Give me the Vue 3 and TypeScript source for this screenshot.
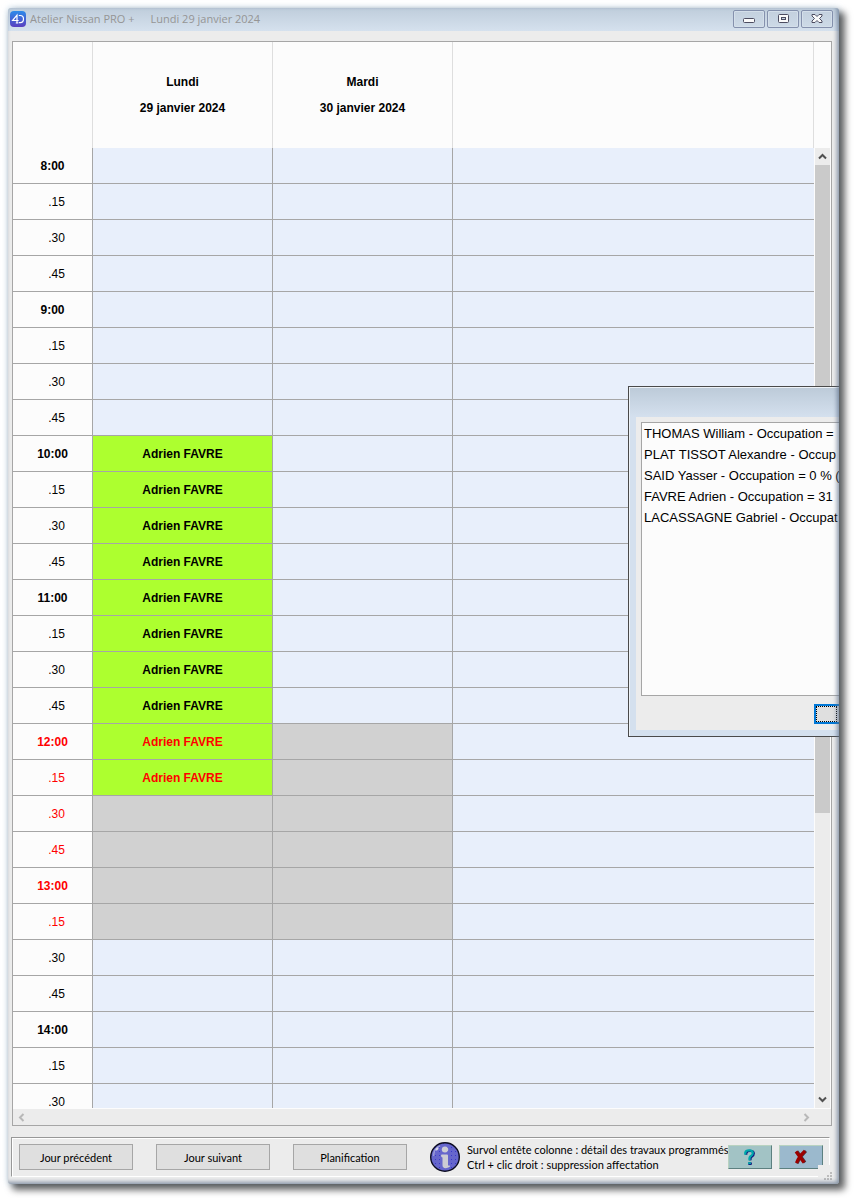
<script setup lang="ts">
interface Slot {
  label: string
  hour: boolean
  pause: boolean
  booked: string
  off: boolean[]
}

const quarters = ['', '.15', '.30', '.45']
const slots: Slot[] = Array.from({ length: 27 }, (_, i) => {
  const hour = i % 4 === 0
  const booked = i >= 8 && i <= 17
  const pause = i >= 16 && i <= 21
  return {
    label: hour ? `${8 + i / 4}:00` : quarters[i % 4],
    hour,
    pause,
    booked: booked ? 'Adrien FAVRE' : '',
    off: [pause && !booked, pause],
  }
})

const days = [
  { name: 'Lundi', date: '29 janvier 2024' },
  { name: 'Mardi', date: '30 janvier 2024' },
]

const occupation: string[] = [
  'THOMAS William - Occupation =',
  'PLAT TISSOT Alexandre - Occup',
  'SAID Yasser - Occupation = 0 % (',
  'FAVRE Adrien - Occupation = 31',
  'LACASSAGNE Gabriel - Occupat',
]

const actions = ['Jour précédent', 'Jour suivant', 'Planification']
</script>

<template>
  <div class="desktop">
    <main class="window">
      <header class="titlebar">
        <svg class="logo" viewBox="0 0 16 16" aria-hidden="true">
          <defs>
            <linearGradient id="logoFill" x1="0" y1="0" x2="0" y2="1">
              <stop offset="0" stop-color="#2d8bea" />
              <stop offset="1" stop-color="#5a3fc0" />
            </linearGradient>
          </defs>
          <rect width="16" height="16" rx="4" fill="url(#logoFill)" />
          <path d="M8.6 9.5H2.6L7 4.2V12M5.8 12h2.4M8.8 4.5h1.4c4.4 0 4.4 7.2 0 7.2H8.8" fill="none" stroke="#fff" stroke-width="1.2" />
        </svg>
        <h1 class="title"><span>Atelier Nissan PRO +</span><span>Lundi 29 janvier 2024</span></h1>
        <div class="controls">
          <button type="button" class="control" aria-label="Réduire">
            <svg viewBox="0 0 12 10"><rect x=".5" y="4.500" width="11" height="4" rx="1" fill="#fafafa" stroke="#4c4c60" /></svg>
          </button>
          <button type="button" class="control" aria-label="Agrandir">
            <svg viewBox="0 0 12 10"><rect x="1.500" y=".5" width="10" height="8" rx="1" fill="#fafafa" stroke="#4c4c60" /><rect x="4.500" y="3.500" width="4" height="2" fill="#c5d2e0" stroke="#4c4c60" /></svg>
          </button>
          <button type="button" class="control" aria-label="Fermer">
            <svg viewBox="0 0 12 10"><path d="M1 .5h3L6 2.500 8 .5h3v1.500L8.500 4.500 11 7v1.500H8L6 6.500 4 8.500H1V7l2.500-2.500L1 2z" fill="#fafafa" stroke="#4c4c60" /></svg>
          </button>
        </div>
      </header>

      <section class="planner">
        <div class="sheet">
          <table>
            <colgroup><col class="c-time" /><col class="c-day" /><col class="c-day" /><col /></colgroup>
            <thead>
              <tr>
                <td></td>
                <th v-for="d in days" :key="d.name" scope="col">{{ d.name }}<br />{{ d.date }}</th>
                <td></td>
              </tr>
            </thead>
            <tbody>
              <tr v-for="(s, i) in slots" :key="i" :class="{ pause: s.pause }">
                <th scope="row" :class="{ quarter: !s.hour }">{{ s.label }}</th>
                <td :class="{ booked: s.booked, off: s.off[0] }">{{ s.booked }}</td>
                <td :class="{ off: s.off[1] }"></td>
                <td></td>
              </tr>
            </tbody>
          </table>
        </div>
        <div class="side">
          <div class="vbar">
            <button type="button" class="arrow" aria-label="Monter">
              <svg viewBox="0 0 9 7"><path d="M1 5.500l3.500-3.500L8 5.500" fill="none" stroke="#505050" stroke-width="2" /></svg>
            </button>
            <div class="thumb"></div>
            <div class="track"></div>
            <button type="button" class="arrow" aria-label="Descendre">
              <svg viewBox="0 0 9 7"><path d="M1 1.500L4.500 5 8 1.500" fill="none" stroke="#505050" stroke-width="2" /></svg>
            </button>
          </div>
        </div>
        <div class="hbar">
          <button type="button" class="arrow" aria-label="Gauche">
            <svg viewBox="0 0 7 9"><path d="M5.500 1L2 4.500 5.500 8" fill="none" stroke="#b8b8b8" stroke-width="2" /></svg>
          </button>
          <button type="button" class="arrow" aria-label="Droite">
            <svg viewBox="0 0 7 9"><path d="M1.500 1L5 4.500 1.500 8" fill="none" stroke="#b8b8b8" stroke-width="2" /></svg>
          </button>
        </div>
      </section>

      <footer class="toolbar">
        <button v-for="a in actions" :key="a" type="button" class="action">{{ a }}</button>
        <svg class="info" viewBox="0 0 30 30" aria-hidden="true">
          <defs>
            <pattern id="infoDots" width="4" height="4" patternUnits="userSpaceOnUse">
              <rect width="4" height="4" fill="#6666cc" />
              <rect x="1" y="1" width="1" height="1" fill="#3838c8" />
            </pattern>
          </defs>
          <circle cx="15" cy="15" r="14.300" fill="url(#infoDots)" stroke="#0c0c20" stroke-width="1.400" />
          <path d="M3.500 14C4 8 7 5 10 4" fill="none" stroke="#9c9cd8" stroke-width="1.500" />
          <path d="M6 8l2-2" stroke="#d8d8e8" stroke-width="2" />
          <ellipse cx="15" cy="7.500" rx="3.200" ry="3" fill="#ccccd4" />
          <path d="M11 13.500q0-1 1-1h5q1 0 1 1v9.500q0 1 2 .6v1q-2 1.700-4.500 1.700-3 0-3-3V15.500q-1.500 0-1.500-2z" fill="#ccccd4" />
        </svg>
        <p class="hint">Survol entête colonne : détail des travaux programmés<br />Ctrl + clic droit : suppression affectation</p>
        <div class="tools">
          <button type="button" class="tool help" aria-label="Aide">
            <svg viewBox="0 0 14 18">
              <path d="M3 6V4.500Q3.500 2 7 2t4 2.500Q11 7 9 8T7.500 12" fill="none" stroke="#10107c" stroke-width="2.400" />
              <path d="M2 6V4Q2.500 1.500 6 1.500t4 2.500Q10 6.500 8 7.500T6.500 12" fill="none" stroke="#00a8ac" stroke-width="2.400" />
              <rect x="5" y="14" width="4" height="3" rx="1" fill="#10107c" /><rect x="5" y="14" width="3" height="2" fill="#00a8ac" />
            </svg>
          </button>
          <button type="button" class="tool quit" aria-label="Quitter">
            <svg viewBox="0 0 14 16">
              <path d="M3 2l8 11M12 1.500Q6 7 3 14" fill="none" stroke="#50303c" stroke-width="3" />
              <path d="M2 2l8 11M11 1.500Q5 7 2.500 13.500" fill="none" stroke="#9c0000" stroke-width="3.200" />
            </svg>
          </button>
        </div>
      </footer>
      <svg class="grip" viewBox="0 0 15 15" aria-hidden="true">
        <path d="M12 7h2v2h-2zM9 10h2v2H9zM12 10h2v2h-2zM6 13h2v2H6zM9 13h2v2H9zM12 13h2v2h-2z" fill="#bcbcbc" />
      </svg>

      <section class="dialog" role="dialog" aria-label="Occupation">
        <div class="dialog-body">
          <ul class="people">
            <li v-for="o in occupation" :key="o">{{ o }}</li>
          </ul>
          <button type="button" class="ok" aria-label="OK"></button>
        </div>
      </section>
    </main>
  </div>
</template>

<style>
body {
  background: #fff;
}
</style>

<style scoped>
* {
  box-sizing: border-box;
}
button {
  font: inherit;
  color: inherit;
  padding: 0;
  margin: 0;
}
.desktop {
  height: 100vh;
  padding: 8px 16px 14px 8px;
  overflow: hidden;
  font: 11px/15px Lato, "Liberation Sans", Arial, sans-serif;
  color: #000;
}
.window {
  position: relative;
  display: flex;
  flex-direction: column;
  height: 100%;
  overflow: hidden;
  background: #ececec;
  border-radius: 3px;
  box-shadow: 5px 5px 7px 1px rgba(0, 0, 0, 0.6), 0 0 6px rgba(150, 185, 215, 0.6);
}
.window::after {
  content: "";
  position: absolute;
  inset: 0;
  pointer-events: none;
  box-shadow: inset -2px -2px 4px rgba(90, 110, 135, 0.7);
}
.titlebar {
  display: flex;
  flex: none;
  align-items: center;
  height: 23px;
  padding: 0 6px 1px 2px;
  background: linear-gradient(#bfcddb, #d5e1ee);
}
.logo {
  width: 16px;
  height: 16px;
}
.title {
  display: flex;
  flex: 1;
  gap: 16px;
  margin: 0 0 0 4px;
  font: 11px/20px "Open Sans", "Noto Sans", sans-serif;
  color: #959595;
  white-space: nowrap;
}
.controls {
  display: flex;
  gap: 2px;
}
.control {
  display: flex;
  align-items: center;
  justify-content: center;
  width: 32px;
  height: 18px;
  background: linear-gradient(#c3d0de, #cddae7);
  border: 1px solid #8591ad;
  border-radius: 2px;
  box-shadow: inset 0 0 0 1px #d4dfea;
}
.control svg {
  width: 12px;
  height: 10px;
}
.planner {
  display: grid;
  flex: 1;
  grid-template-columns: minmax(0, 1fr) 17px;
  grid-template-rows: minmax(0, 1fr) 17px;
  min-height: 0;
  margin: 10px 7px 11px 4px;
  border: 1px solid #a6a6a6;
}
.sheet {
  overflow: hidden;
  background: #e8effb;
}
table {
  width: 100%;
  table-layout: fixed;
  border-collapse: separate;
  border-spacing: 0;
  font-family: "Liberation Sans", Arial, sans-serif;
}
.c-time {
  width: 80px;
}
.c-day {
  width: 180px;
}
th,
td {
  padding: 0;
  text-align: center;
  font-size: 12px;
  font-weight: bold;
}
thead th,
thead td {
  height: 106px;
  background: #fcfcfc;
  border-right: 1px solid #dedede;
  line-height: 26px;
}
tbody th,
tbody td {
  height: 36px;
  padding-top: 2px;
  background: #e8effb;
  border-right: 1px solid #a6a6a6;
  border-bottom: 1px solid #a6a6a6;
  line-height: 15px;
}
tbody th {
  background: #fcfcfc;
}
tbody td:last-child {
  border-right: 0;
}
tbody th.quarter {
  padding-left: 8px;
  font-weight: normal;
}
tbody td.booked {
  background: #adff2f;
}
tbody td.off {
  background: #d1d1d1;
}
.pause {
  color: #f00;
}
.side {
  display: flex;
  flex-direction: column;
  padding-top: 106px;
  background: #fcfcfc;
}
.vbar {
  display: flex;
  flex: 1;
  flex-direction: column;
  min-height: 0;
  margin: 0 1px;
  background: #ececec;
}
.arrow {
  display: flex;
  flex: none;
  align-items: center;
  justify-content: center;
  width: 16px;
  height: 16px;
  background: none;
  border: 0;
}
.vbar .arrow {
  width: 15px;
  height: 17px;
}
.vbar .arrow svg {
  width: 9px;
  height: 7px;
}
.hbar .arrow svg {
  width: 7px;
  height: 9px;
}
.thumb {
  flex: 7;
  background: #cacaca;
}
.track {
  flex: 3;
}
.hbar {
  display: flex;
  grid-column: 1 / 3;
  justify-content: space-between;
  padding-right: 17px;
  border-top: 1px solid #fcfcfc;
}
.toolbar {
  display: flex;
  flex: none;
  align-items: center;
  height: 40px;
  margin: 0 9px 7px 3px;
  padding: 0 7px;
  border: 1px solid #fff;
  border-top-color: #989898;
  border-left-color: #989898;
  box-shadow: inset 1px 1px #fff;
}
.action {
  flex: none;
  width: 114px;
  height: 26px;
  margin-right: 23px;
  background: #dfdfdf;
  border: 1px solid #a6a6a6;
}
.info {
  flex: none;
  width: 30px;
  height: 30px;
}
.hint {
  margin: 0 0 0 7px;
  white-space: nowrap;
}
.tools {
  display: flex;
  gap: 7px;
  margin: 0 0 0 auto;
}
.tool {
  display: flex;
  align-items: center;
  justify-content: center;
  width: 44px;
  height: 24px;
  border: 1px solid #b8d2c0;
  border-right-color: #5c8080;
  border-bottom-color: #5c8080;
}
.tool svg {
  width: 14px;
  height: 17px;
}
.help {
  background: #a2c3c5;
}
.quit {
  background: #9bb9cd;
}
.grip {
  position: absolute;
  right: 6px;
  bottom: 4px;
  width: 15px;
  height: 15px;
  background: #ececec;
}
.dialog {
  position: absolute;
  top: 378px;
  right: 0;
  left: 620px;
  padding: 30px 0 6px 7px;
  overflow: hidden;
  background: linear-gradient(#bccad8, #d4e0ee 30px);
  border: 1px solid #4a4a4a;
  border-right: 0;
  box-shadow: inset 1px 1px #edf2f7;
}
.dialog-body {
  display: flex;
  flex-direction: column;
  height: 313px;
  padding: 5px 0 0 5px;
  background: #ececec;
}
.people {
  height: 274px;
  margin: 0 0 8px;
  padding: 0 0 0 2px;
  overflow: hidden;
  list-style: none;
  background: #fcfcfc;
  border: 1px solid #a6a6a6;
  border-right: 0;
  font-family: "Liberation Sans", Arial, sans-serif;
  font-size: 13px;
  line-height: 21px;
  white-space: nowrap;
}
.ok {
  align-self: flex-end;
  width: 25px;
  height: 20px;
  background: #dfdfdf;
  border: 2px solid #0078d7;
  border-right: 0;
  outline: 1px dotted #000;
  outline-offset: -3px;
}
</style>
